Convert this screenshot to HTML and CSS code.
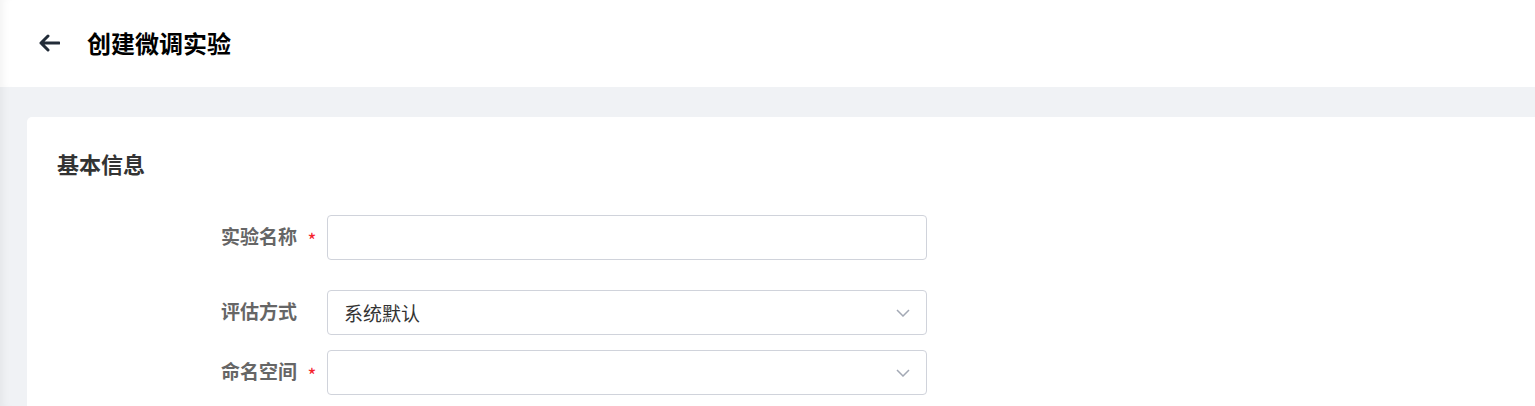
FILE: index.html
```html
<!DOCTYPE html>
<html lang="zh">
<head>
<meta charset="utf-8">
<title>创建微调实验</title>
<link rel="stylesheet" href="styles.css">
</head>
<body>
<div class="page">
  <header class="topbar">
    <span class="back">
      <svg width="22" height="18" viewBox="0 0 22 18"><path d="M21 9H3M10 2L3 9l7 7" fill="none" stroke="#222c38" stroke-width="3" stroke-linecap="round" stroke-linejoin="round"/></svg>
    </span>
    <h1 class="title">创建微调实验</h1>
  </header>
  <main class="content">
    <section class="card">
      <h2 class="section-title">基本信息</h2>
      <div class="form">
        <div class="row row-first">
          <label class="label">实验名称<span class="req">*</span></label>
          <div class="control"><input class="input" type="text"></div>
        </div>
        <div class="row row-second">
          <label class="label">评估方式<span class="req"></span></label>
          <div class="control select"><span class="value">系统默认</span>
            <svg class="chev" width="14" height="8" viewBox="0 0 14 8"><path d="M1 1l6 6 6-6" fill="none" stroke="#a3a9b5" stroke-width="1.5"/></svg>
          </div>
        </div>
        <div class="row">
          <label class="label">命名空间<span class="req">*</span></label>
          <div class="control select"><span class="value"></span>
            <svg class="chev" width="14" height="8" viewBox="0 0 14 8"><path d="M1 1l6 6 6-6" fill="none" stroke="#a3a9b5" stroke-width="1.5"/></svg>
          </div>
        </div>
      </div>
    </section>
  </main>
</div>
</body>
</html>
```

FILE: styles.css
```css
* { box-sizing: border-box; }
html, body { margin: 0; padding: 0; }
body {
  font-family: "Noto Sans CJK SC", "Noto Sans", "Liberation Sans", sans-serif;
  background: #f0f2f5;
  overflow: hidden;
  height: 406px;
}
.page {
  height: 406px;
  box-shadow: inset 9px 0 8px -6px rgba(0,0,0,0.05);
}
.topbar {
  height: 87px;
  background: #fff;
  display: flex;
  align-items: center;
  padding-left: 38px;
  box-shadow: inset 9px 0 8px -6px rgba(0,0,0,0.05);
}
.back { display: flex; width: 22px; height: 18px; margin-right: 27px; margin-top: -2px; }
.title {
  margin: 0;
  font-size: 24px;
  font-weight: 700;
  color: #000;
  line-height: 1;
  margin-top: -2px;
}
.content {
  padding: 30px 0 0 27px;
}
.card {
  background: #fff;
  border-radius: 5px 0 0 0;
  height: 300px;
  padding: 31px 30px 0 30px;
}
.section-title {
  margin: 0;
  font-size: 22px;
  font-weight: 700;
  color: #333;
  line-height: 30px;
}
.form { margin-top: 37px; }
.row { display: flex; align-items: center; }
.row-first { margin-bottom: 30px; }
.row-second { margin-bottom: 15px; }
.label {
  width: 270px;
  display: flex;
  justify-content: flex-end;
  align-items: center;
  font-size: 19px;
  font-weight: 700;
  color: #666;
  padding-right: 10px;
  margin-top: -4px;
}
.req {
  color: #f5222d;
  font-size: 19px;
  font-weight: 400;
  width: 10px;
  margin-left: 10px;
  text-align: center;
  line-height: 1;
  padding-top: 8px;
}
.control {
  width: 600px;
  height: 45px;
  border: 1px solid #d0d3db;
  border-radius: 4px;
  display: flex;
  align-items: center;
  padding: 0 16px;
  background: #fff;
}
.input {
  border: 0;
  outline: 0;
  width: 100%;
  height: 100%;
  font: inherit;
  background: transparent;
}
.select { justify-content: space-between; }
.value { font-size: 19px; color: #333; }
.chev { margin-right: 0; }
```
